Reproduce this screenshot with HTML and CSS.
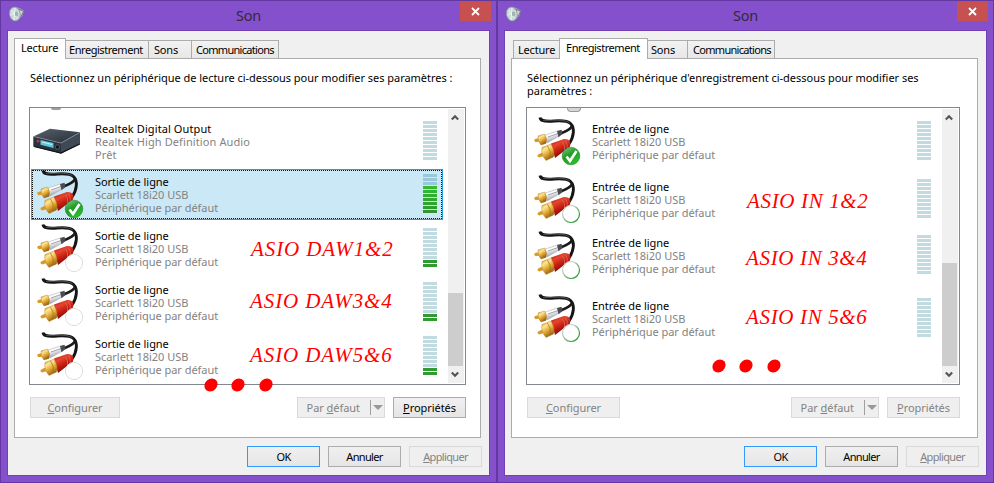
FILE: index.html
```html
<!DOCTYPE html>
<html lang="fr">
<head>
    <meta charset="UTF-8">
    <meta name="viewport" content="width=device-width, initial-scale=1.0">
    <title>Son</title>
    <link rel="stylesheet" href="styles.css">
</head>
<body>

<svg class="defs" width="0" height="0">
    <defs>
        <linearGradient id="gold" x1="0.1" y1="0" x2="0.6" y2="1">
            <stop offset="0" stop-color="#c08a24"/>
            <stop offset="0.3" stop-color="#ffe794"/>
            <stop offset="0.6" stop-color="#e3aa35"/>
            <stop offset="1" stop-color="#8a5810"/>
        </linearGradient>
        <linearGradient id="silver" x1="0" y1="0" x2="0.4" y2="1">
            <stop offset="0" stop-color="#b9bbc1"/>
            <stop offset="0.4" stop-color="#ffffff"/>
            <stop offset="1" stop-color="#94969e"/>
        </linearGradient>
        <linearGradient id="red" x1="0.1" y1="0" x2="0.6" y2="1">
            <stop offset="0" stop-color="#a51a0c"/>
            <stop offset="0.3" stop-color="#e8452f"/>
            <stop offset="0.6" stop-color="#c41c10"/>
            <stop offset="1" stop-color="#5d0804"/>
        </linearGradient>
        <linearGradient id="green" x1="0" y1="0" x2="0.6" y2="1">
            <stop offset="0" stop-color="#8fd08a"/>
            <stop offset="0.5" stop-color="#1f9a25"/>
            <stop offset="1" stop-color="#2cc02c"/>
        </linearGradient>
        <linearGradient id="ring" x1="0" y1="0" x2="1" y2="1">
            <stop offset="0.25" stop-color="#c9cfc9"/>
            <stop offset="0.8" stop-color="#2d9a35"/>
        </linearGradient>
        <linearGradient id="metal" x1="0" y1="0" x2="1" y2="1">
            <stop offset="0" stop-color="#59636f"/>
            <stop offset="1" stop-color="#252b33"/>
        </linearGradient>
    </defs>
    <symbol id="plugs" viewBox="0 0 48 50">
        <path d="M7 1.500C7.500 5 11 5.300 17 5.200S33 3.200 37.500 7.500S41 21 36 28" fill="none" stroke="#151515" stroke-width="2.900"/>
        <path d="M10 4.300C16 5 31 2.500 36.500 6.800" fill="none" stroke="#777" stroke-width="0.600"/>
        <path d="M39 10C37 14.500 32 15.500 26 18" fill="none" stroke="#1b1b1b" stroke-width="2.600"/>
        <path d="M12 19L24 15Q27.500 15.500 26.500 20L14 27Z" fill="url(#silver)" stroke="#a2a2a8" stroke-width="0.400"/>
        <path d="M15 21L25 17.500" stroke="#85878f" stroke-width="0.700"/>
        <path d="M24 15L28.500 13.800L29.500 18L25.500 21.200Z" fill="#4a4b52"/>
        <path d="M1.200 24.500Q1.200 22.800 3 22.700L6 22L7 25.500L2.500 26.300Z" fill="#d79b2b"/>
        <path d="M5 20L11.500 18Q14.500 22 13 27.500L8 29Q4.500 25 5 20Z" fill="url(#gold)" stroke="#a97418" stroke-width="0.400"/>
        <path d="M18 27.500L31 23Q39 22.500 37 30.500L22 42Z" fill="url(#red)"/>
        <path d="M29.500 26Q32.500 29 31.500 34M32.500 25Q35 28 34.200 32" fill="none" stroke="#dc7464" stroke-width="0.700"/>
        <path d="M4.500 40.500Q4 38.500 6 38L11 36L12 39.500L6.500 41.500Z" fill="#d79b2b"/>
        <path d="M9 31.500L17.500 28.300Q22.500 34 20.500 41L13 44.500Q7.500 38.500 9 31.500Z" fill="url(#gold)" stroke="#a97418" stroke-width="0.400"/>
        <path d="M14.500 30Q18.500 35 17 42" fill="none" stroke="#a66f14" stroke-width="0.700"/>
    </symbol>
    <symbol id="receiver" viewBox="-4 0 52 50">
        <path d="M-2.700 20.500L14 12.800L44 16.300L25 27Z" fill="url(#metal)"/>
        <path d="M-2.700 20.500L25 27V37.500L-2.700 30.500Z" fill="#2a323c"/>
        <path d="M25 27L44 16.300V28.500L25 37.500Z" fill="#3f4954"/>
        <path d="M-2.700 20.500L25 27L44 16.300" fill="none" stroke="#8995a2" stroke-width="0.700"/>
        <path d="M4.500 24L17.500 27V32L4.500 28.700Z" fill="#5fc7da"/>
        <path d="M6 26L16 28.500" stroke="#c4f3f8" stroke-width="1"/>
        <circle cx="2" cy="25" r="1.500" fill="#b33b3b"/>
        <circle cx="21.500" cy="31" r="2.200" fill="#11161c" stroke="#697684" stroke-width="0.600"/>
        <path d="M-2 30.500L25 37L43.500 28" fill="none" stroke="#10151b" stroke-width="1.200"/>
    </symbol>
    <symbol id="badge-check" viewBox="0 0 20 20">
        <circle cx="10" cy="10" r="8.800" fill="url(#green)" stroke="#23882a" stroke-width="0.600"/>
        <path d="M5.500 10.500L9 15L15.500 5" fill="none" stroke="#fff" stroke-width="2.700"/>
    </symbol>
    <symbol id="badge-gray" viewBox="0 0 20 20">
        <circle cx="10" cy="10" r="8.600" fill="#fff" stroke="#d8dad8" stroke-width="0.900"/>
    </symbol>
    <symbol id="badge-green" viewBox="0 0 20 20">
        <circle cx="10" cy="10" r="8.500" fill="#fff" stroke="url(#ring)" stroke-width="1.200"/>
    </symbol>
    <symbol id="speaker" viewBox="0 0 16 16">
        <path d="M6 1L10 1.800L15 4.500L13.500 10L8 14.500Z" fill="#9aa0a2"/>
        <path d="M10 3.500L14.500 5L13 9L10 11Z" fill="#cdd5d6" stroke="#5d6467" stroke-width="0.700"/>
        <ellipse cx="5.800" cy="8" rx="5.400" ry="7" fill="#c8d6d7" stroke="#8a9897" stroke-width="0.700" transform="rotate(-12 5.800 8)"/>
        <path d="M2.500 4L8 12M1.500 9L9.500 6M6 2L5 14" stroke="#f0fafa" stroke-width="0.900"/>
        <ellipse cx="7.500" cy="8" rx="1.700" ry="2.400" fill="#a2b0b2"/>
    </symbol>
    <symbol id="close" viewBox="0 0 9 9">
        <path d="M1 1L8 8M8 1L1 8" stroke="#fff" stroke-width="1.800"/>
    </symbol>
    <symbol id="up" viewBox="0 0 8 7">
        <path d="M0.800 5.500L4 2.200L7.200 5.500" fill="none" stroke="#555" stroke-width="2.100"/>
    </symbol>
    <symbol id="down" viewBox="0 0 8 7">
        <path d="M0.800 1.500L4 4.800L7.200 1.500" fill="none" stroke="#555" stroke-width="2.100"/>
    </symbol>
    <symbol id="dots" viewBox="0 0 70 14">
        <g fill="#f00">
            <ellipse cx="7" cy="7" rx="7" ry="6" transform="rotate(-42 7 7)"/>
            <ellipse cx="34" cy="7" rx="7" ry="6" transform="rotate(-42 34 7)"/>
            <ellipse cx="62" cy="7" rx="7" ry="6" transform="rotate(-42 62 7)"/>
        </g>
    </symbol>
</svg>

<div class="window playback">
    <div class="titlebar">
        <svg class="app-icon"><use href="#speaker"/></svg>
        <span class="title">Son</span>
        <div class="close"><svg><use href="#close"/></svg></div>
    </div>
    <div class="client">
        <div class="tabs">
            <div class="tab active t-lecture">Lecture</div>
            <div class="tab t-enreg">Enregistrement</div>
            <div class="tab t-sons">Sons</div>
            <div class="tab t-comm">Communications</div>
        </div>
        <div class="panel">
            <p class="intro">Sélectionnez un périphérique de lecture ci-dessous pour modifier ses paramètres :</p>
            <div class="list">
                <div class="clipped"></div>
                <div class="items">
                    <div class="item realtek">
                        <div class="icon"><svg class="receiver"><use href="#receiver"/></svg></div>
                        <div class="info"><b>Realtek Digital Output</b><span>Realtek High Definition Audio</span><span>Prêt</span></div>
                        <div class="meter"></div>
                    </div>
                    <div class="item selected">
                        <div class="icon"><svg class="plugs"><use href="#plugs"/></svg><svg class="badge"><use href="#badge-check"/></svg></div>
                        <div class="info"><b>Sortie de ligne</b><span>Scarlett 18i20 USB</span><span>Périphérique par défaut</span></div>
                        <div class="meter"><div class="level high"></div></div>
                    </div>
                    <div class="item">
                        <div class="icon"><svg class="plugs"><use href="#plugs"/></svg><svg class="badge"><use href="#badge-gray"/></svg></div>
                        <div class="info"><b>Sortie de ligne</b><span>Scarlett 18i20 USB</span><span>Périphérique par défaut</span></div>
                        <div class="meter"><div class="level low"></div></div>
                    </div>
                    <div class="item">
                        <div class="icon"><svg class="plugs"><use href="#plugs"/></svg><svg class="badge"><use href="#badge-gray"/></svg></div>
                        <div class="info"><b>Sortie de ligne</b><span>Scarlett 18i20 USB</span><span>Périphérique par défaut</span></div>
                        <div class="meter"><div class="level low"></div></div>
                    </div>
                    <div class="item">
                        <div class="icon"><svg class="plugs"><use href="#plugs"/></svg><svg class="badge"><use href="#badge-gray"/></svg></div>
                        <div class="info"><b>Sortie de ligne</b><span>Scarlett 18i20 USB</span><span>Périphérique par défaut</span></div>
                        <div class="meter"><div class="level low"></div></div>
                    </div>
                </div>
                <div class="scrollbar">
                    <svg><use href="#up"/></svg>
                    <div class="thumb"></div>
                    <svg><use href="#down"/></svg>
                </div>
            </div>
            <div class="actions">
                <div class="btn disabled configure"><span><u>C</u>onfigurer</span></div>
                <div class="btn disabled split"><span>Par <u>d</u>éfaut</span><i class="arrow"></i></div>
                <div class="btn props"><span><u>P</u>ropriétés</span></div>
            </div>
        </div>
        <div class="footer">
            <div class="btn default">OK</div>
            <div class="btn">Annuler</div>
            <div class="btn disabled"><span><u>A</u>ppliquer</span></div>
        </div>
    </div>
    <div class="note daw12">ASIO DAW1&amp;2</div>
    <div class="note daw34">ASIO DAW3&amp;4</div>
    <div class="note daw56">ASIO DAW5&amp;6</div>
    <svg class="dots"><use href="#dots"/></svg>
</div>

<div class="window recording">
    <div class="titlebar">
        <svg class="app-icon"><use href="#speaker"/></svg>
        <span class="title">Son</span>
        <div class="close"><svg><use href="#close"/></svg></div>
    </div>
    <div class="client">
        <div class="tabs">
            <div class="tab t-lecture">Lecture</div>
            <div class="tab active t-enreg">Enregistrement</div>
            <div class="tab t-sons">Sons</div>
            <div class="tab t-comm">Communications</div>
        </div>
        <div class="panel">
            <p class="intro">Sélectionnez un périphérique d'enregistrement ci-dessous pour modifier ses<br>paramètres :</p>
            <div class="list">
                <div class="clipped"></div>
                <div class="items">
                    <div class="item">
                        <div class="icon"><svg class="plugs"><use href="#plugs"/></svg><svg class="badge"><use href="#badge-check"/></svg></div>
                        <div class="info"><b>Entrée de ligne</b><span>Scarlett 18i20 USB</span><span>Périphérique par défaut</span></div>
                        <div class="meter"></div>
                    </div>
                    <div class="item">
                        <div class="icon"><svg class="plugs"><use href="#plugs"/></svg><svg class="badge"><use href="#badge-green"/></svg></div>
                        <div class="info"><b>Entrée de ligne</b><span>Scarlett 18i20 USB</span><span>Périphérique par défaut</span></div>
                        <div class="meter"></div>
                    </div>
                    <div class="item">
                        <div class="icon"><svg class="plugs"><use href="#plugs"/></svg><svg class="badge"><use href="#badge-green"/></svg></div>
                        <div class="info"><b>Entrée de ligne</b><span>Scarlett 18i20 USB</span><span>Périphérique par défaut</span></div>
                        <div class="meter"></div>
                    </div>
                    <div class="item">
                        <div class="icon"><svg class="plugs"><use href="#plugs"/></svg><svg class="badge"><use href="#badge-green"/></svg></div>
                        <div class="info"><b>Entrée de ligne</b><span>Scarlett 18i20 USB</span><span>Périphérique par défaut</span></div>
                        <div class="meter"></div>
                    </div>
                </div>
                <div class="scrollbar">
                    <svg><use href="#up"/></svg>
                    <div class="thumb"></div>
                    <svg><use href="#down"/></svg>
                </div>
            </div>
            <div class="actions">
                <div class="btn disabled configure"><span><u>C</u>onfigurer</span></div>
                <div class="btn disabled split"><span>Par <u>d</u>éfaut</span><i class="arrow"></i></div>
                <div class="btn disabled props"><span><u>P</u>ropriétés</span></div>
            </div>
        </div>
        <div class="footer">
            <div class="btn default">OK</div>
            <div class="btn">Annuler</div>
            <div class="btn disabled"><span><u>A</u>ppliquer</span></div>
        </div>
    </div>
    <div class="note in12">ASIO IN 1&amp;2</div>
    <div class="note in34">ASIO IN 3&amp;4</div>
    <div class="note in56">ASIO IN 5&amp;6</div>
    <svg class="dots"><use href="#dots"/></svg>
</div>

</body>
</html>
```
FILE: styles.css
```css
* {
    box-sizing: border-box;
}

body {
    margin: 0;
    width: 994px;
    height: 483px;
    display: flex;
    overflow: hidden;
    background-color: #8450cb;
    font-family: "Noto Sans", "Open Sans", sans-serif;
    font-size: 11px;
    line-height: 13px;
    color: #000;
}

svg {
    display: block;
    flex: none;
}

.defs {
    position: absolute;
}

.window {
    position: relative;
    width: 497px;
    height: 483px;
    padding: 0 7px 7px;
    border: 1px solid #6338a0;
    background-color: #8450cb;
}

.titlebar {
    display: flex;
    justify-content: space-between;
    height: 30px;
    margin-right: -2px;
}

.app-icon {
    width: 16px;
    height: 16px;
    margin: 5px 0 0 1px;
}

.title {
    padding-left: 12px;
    font-size: 14.5px;
    line-height: 29px;
    letter-spacing: -0.3px;
    color: #35283f;
}

.close {
    display: flex;
    align-items: center;
    justify-content: center;
    width: 31px;
    height: 20px;
    background-color: #c75050;
}

.close svg {
    width: 9px;
    height: 9px;
}

.client {
    width: 481px;
    height: 444px;
    padding: 7px 7px 0 6px;
    background-color: #f0f0f0;
    outline: 1px solid #7240b4;
}

.tabs {
    display: flex;
    align-items: flex-end;
    height: 20px;
}

.tab {
    height: 18px;
    padding: 2px 0 0 3px;
    border: 1px solid #acacac;
    border-left-width: 0;
    border-bottom: none;
    background: linear-gradient(#f2f2f2, #e7e7e7);
    letter-spacing: -0.2px;
    white-space: nowrap;
}

.tab.active {
    position: relative;
    height: 21px;
    margin-bottom: -1px;
    padding-left: 6px;
    border-left-width: 1px;
    background: #fff;
}

.tab.t-enreg {
    letter-spacing: -0.45px;
}

.tab.t-comm {
    letter-spacing: -0.7px;
}

.playback .t-lecture { width: 52px; }
.playback .t-enreg { width: 83px; }
.playback .t-sons { width: 43px; padding-left: 5px; }
.playback .t-comm { width: 87px; padding-left: 4px; }
.recording .t-lecture { width: 47px; margin-left: 2px; padding-left: 4px; border-left-width: 1px; }
.recording .t-enreg { width: 89px; margin-left: -1px; }
.recording .t-sons { width: 40px; }
.recording .t-comm { width: 87px; padding-left: 5px; }

.panel {
    width: 467px;
    height: 380px;
    padding: 12px 14px 0 15px;
    border: 1px solid #acacac;
    background-color: #fff;
}

.intro {
    height: 36px;
    margin: 0;
    letter-spacing: -0.03px;
    white-space: nowrap;
}

.list {
    position: relative;
    display: flex;
    justify-content: space-between;
    width: 437px;
    height: 278px;
    margin-left: -1px;
    padding: 1px;
    border: 1px solid #828790;
}

.recording .list {
    width: 434px;
}

/* bottom edge of the entry scrolled out of view */
.clipped {
    position: absolute;
    left: 21px;
    top: 0;
    width: 10px;
    height: 2px;
    border-radius: 0 0 5px 5px;
    background-color: #9a9ea2;
}

.recording .clipped {
    left: 40px;
    width: 14px;
    height: 4px;
    border: 1px solid #999;
    border-top: none;
    border-radius: 0 0 7px 7px;
    background-color: #d9d5d9;
}

.items {
    width: 412px;
    padding-top: 7px;
}

.item {
    display: flex;
    height: 51px;
    margin-bottom: 3px;
    border: 1px solid transparent;
}

.item:first-child {
    margin-bottom: 2px;
}

.recording .item:nth-child(2) { margin-bottom: 5px; }
.recording .item:nth-child(1) { margin-bottom: 7px; }
.recording .item:nth-child(3) { margin-bottom: 12px; }

.item.selected {
    border-color: #26a0da;
    background-color: #cbe8f6;
    outline: 1px dotted #111;
    outline-offset: -2px;
}

.icon {
    position: relative;
    width: 59px;
    margin-left: 4px;
}

.plugs {
    width: 48px;
    height: 50px;
    margin-top: -1px;
}

.receiver {
    width: 52px;
    height: 50px;
    margin: -1px 0 0 -4px;
}

.badge {
    position: absolute;
    left: 28px;
    top: 29px;
    width: 20px;
    height: 20px;
}

.info {
    display: flex;
    flex-direction: column;
    flex: 1;
    padding-top: 5px;
    letter-spacing: -0.04px;
    white-space: nowrap;
}

.realtek .info {
    letter-spacing: 0.1px;
}

.info b {
    font-weight: normal;
}

.info span {
    color: #838383;
}

.meter {
    display: flex;
    flex-direction: column;
    justify-content: flex-end;
    width: 14px;
    height: 39px;
    margin: 4px 5px 0 0;
    background: repeating-linear-gradient(#c1dbe1 0 3px, transparent 3px 4px);
}

.recording .meter {
    margin-right: 8px;
}

.selected .meter {
    background: repeating-linear-gradient(#98c8d9 0 3px, transparent 3px 4px);
}

.level {
    background: repeating-linear-gradient(#309c30 0 3px, #fff 3px 4px);
}

.level.low {
    height: 7px;
}

.level.high {
    height: 27px;
    background: repeating-linear-gradient(transparent 0 3px, #cbe8f6 3px 4px), linear-gradient(#31bd31, #309530);
}

.scrollbar {
    display: flex;
    flex-direction: column;
    width: 16px;
    background-color: #f0f0f0;
}

.scrollbar svg {
    width: 8px;
    height: 7px;
    margin: 5px 3px;
}

.thumb {
    width: 15px;
    height: 73px;
    margin-top: auto;
    background-color: #cdcdcd;
}

.recording .thumb {
    height: 103px;
}

.actions {
    display: flex;
    width: 436px;
    margin-top: 12px;
}

.recording .actions {
    width: 433px;
}

.btn {
    display: flex;
    align-items: center;
    justify-content: center;
    width: 73px;
    height: 21px;
    border: 1px solid #acacac;
    background: linear-gradient(#f0f0f0, #e5e5e5);
    letter-spacing: -0.65px;
}

.actions .btn {
    letter-spacing: -0.05px;
}

.btn.disabled {
    border-color: #d9d9d9;
    background: #efefef;
    color: #838383;
}

.btn.default {
    border-color: #3399ff;
}

u {
    text-underline-offset: 1px;
}

.configure {
    width: 90px;
    margin-right: auto;
}

.recording .configure {
    width: 93px;
}

.btn.split {
    width: 88px;
    margin-right: 8px;
    justify-content: flex-end;
}

.arrow {
    display: flex;
    align-items: center;
    width: 14px;
    height: 15px;
    margin-left: 10px;
    border-left: 1px solid #a0a0a0;
}

.arrow::after {
    content: "";
    margin-left: 2px;
    border: 5px solid transparent;
    border-top-color: #999;
    border-bottom: none;
}

.footer {
    display: flex;
    justify-content: flex-end;
    gap: 8px;
    margin-top: 8px;
}

/* red handwritten-style labels over the lists */
.note {
    position: absolute;
    font-family: "Liberation Serif", serif;
    font-size: 21px;
    font-style: italic;
    line-height: 24px;
    letter-spacing: 0.65px;
    white-space: nowrap;
    color: #f00;
}

.daw12 { left: 250px; top: 236px; letter-spacing: 0.9px; }
.daw34 { left: 249px; top: 288px; letter-spacing: 0.9px; }
.daw56 { left: 249px; top: 342px; letter-spacing: 0.9px; }
.in12 { left: 249px; top: 188px; }
.in34 { left: 248px; top: 245px; }
.in56 { left: 248px; top: 304px; }

.dots {
    position: absolute;
    left: 203px;
    top: 377px;
    width: 70px;
    height: 14px;
}

.recording .dots {
    left: 214px;
    top: 358px;
}
```
